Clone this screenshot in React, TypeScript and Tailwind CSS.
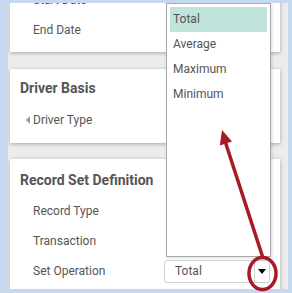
const font = { fontFamily: 'Roboto, "Liberation Sans", sans-serif' };

const options = ['Total', 'Average', 'Maximum', 'Minimum'];

function Row({ label, children, caret }: { label: string; children?: React.ReactNode; caret?: boolean }) {
  return (
    <div className="flex h-[30px] items-center">
      <div className="relative flex w-[154px] shrink-0 items-center pl-[23px] text-[12px] text-[#555]">
        {caret && (
          <span className="absolute left-[16px] top-1/2 -translate-y-1/2 border-y-[4px] border-r-[4px] border-y-transparent border-r-[#9a9a9a]" />
        )}
        {label}
      </div>
      {children}
    </div>
  );
}

function SetSelect() {
  return (
    <div className="relative h-[23px] w-[106px]">
      {/* open list */}
      <div className="absolute bottom-[26px] left-[2px] h-[254px] w-[105px] border border-[#a9a9a9] bg-white p-[3px] shadow-[1px_1px_3px_rgba(0,0,0,0.15)]">
        {options.map((o, i) => (
          <div
            key={o}
            className={`flex h-[25px] items-center pl-[3px] text-[12px] text-[#555] ${i === 0 ? 'bg-[#c0e4dc]' : ''}`}
          >
            {o}
          </div>
        ))}
      </div>
      <div className="flex h-full w-full items-center rounded-[3px] border border-[#cfcfcf] bg-white">
        <span className="flex-1 pl-[10px] text-[12px] text-[#555]">Total</span>
        <span className="flex h-full w-[15px] items-center justify-center border-l border-[#d6d6d6]">
          <span className="border-x-[4px] border-t-[5px] border-x-transparent border-t-black" />
        </span>
      </div>
    </div>
  );
}

export default function App() {
  return (
    <div className="relative h-[293px] w-[292px] bg-[#c5d8f0] pb-[4px] pl-[8px] pr-[4px] pt-[3px]" style={font}>
      <div className="h-full w-full overflow-hidden bg-[#ececec] pl-[2px] pr-[8px]">
        <div className="-mt-[24px] bg-white pb-[7px] pt-[6px] shadow-[0_1px_4px_rgba(0,0,0,0.3)]">
          <Row label="Start Date" />
          <Row label="End Date" />
        </div>

        <div className="mt-[17px] bg-white pb-[8px] pt-[9px] shadow-[0_1px_4px_rgba(0,0,0,0.3)]">
          <div className="flex h-[20px] items-center pl-[10px] text-[14px] font-bold text-[#555]">Driver Basis</div>
          <div className="mt-[7px]">
            <Row label="Driver Type" caret />
          </div>
        </div>

        <div className="mt-[16px] bg-white pb-[8px] pt-[11px] shadow-[0_1px_4px_rgba(0,0,0,0.3)]">
          <div className="flex h-[20px] items-center pl-[10px] text-[14px] font-bold text-[#555]">Record Set Definition</div>
          <div className="mt-[6px]">
            <Row label="Record Type" />
            <Row label="Transaction" />
            <Row label="Set Operation">
              <SetSelect />
            </Row>
          </div>
        </div>
      </div>

      {/* annotation */}
      <svg className="pointer-events-none absolute left-0 top-0" width="292" height="293" viewBox="0 0 292 293">
        <line x1="263" y1="258" x2="225" y2="141" stroke="#a51c27" strokeWidth="3.5" />
        <polygon points="222,130 232,141.5 219.8,145.5" fill="#a51c27" />
        <ellipse cx="262.5" cy="273.5" rx="13.5" ry="16" fill="none" stroke="#a51c27" strokeWidth="3.5" />
      </svg>
    </div>
  );
}
